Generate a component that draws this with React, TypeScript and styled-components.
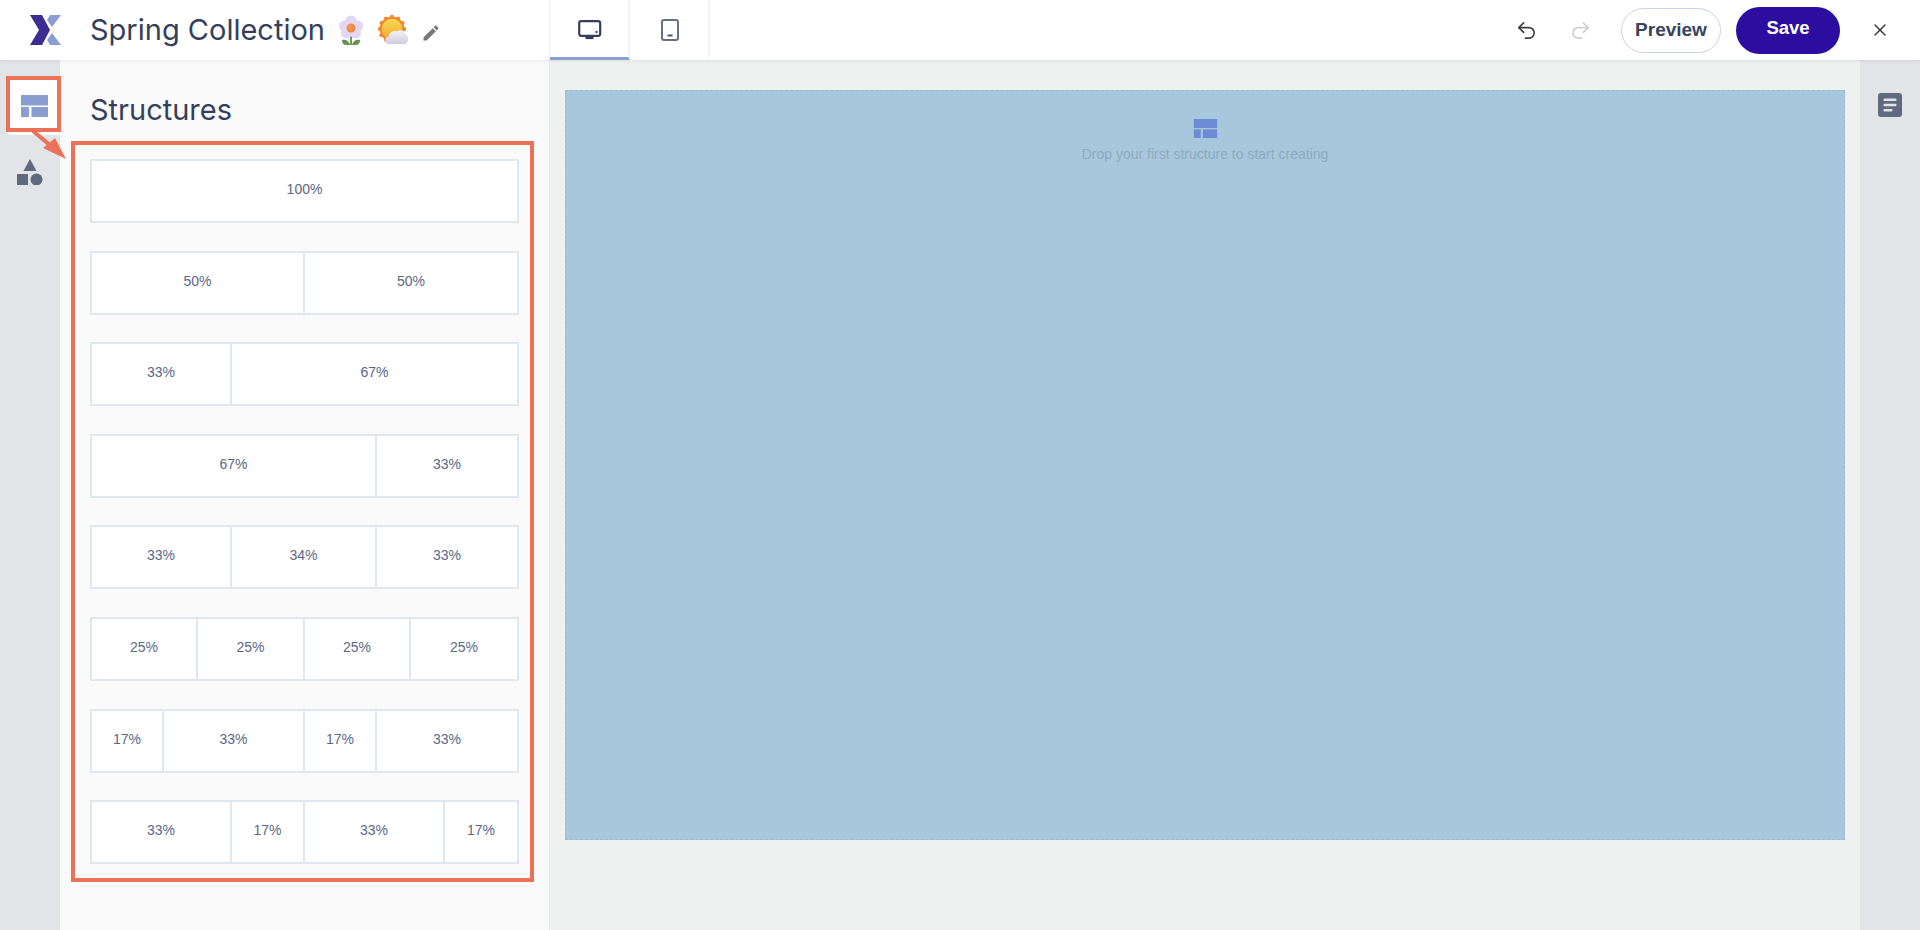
import React from "react";
import styled, { createGlobalStyle } from "styled-components";
import { Undo2, Redo2, X } from "lucide-react";
import { MdEdit } from "react-icons/md";

const Global = createGlobalStyle`
  html, body { margin: 0; padding: 0; background: #fff; }
  * { box-sizing: border-box; }
  body { font-family: "Liberation Sans", Arial, sans-serif; overflow: hidden; }
`;

const Page = styled.div`
  width: 1920px; height: 930px; display: flex; flex-direction: column; position: relative; overflow: hidden;
`;
const Header = styled.header`
  height: 60px; flex: none; display: flex; align-items: stretch; background: #fff;
  box-shadow: 0 1px 3px rgba(60, 70, 90, 0.1); position: relative; z-index: 2;
`;
const Brand = styled.div`
  width: 550px; flex: none; display: flex; align-items: center; padding-left: 30px; border-right: 1px solid #eeeff1;
`;
const Title = styled.h1`
  margin: 0 0 0 29px; font: 400 29px/60px Inter, sans-serif; color: #333f5c; white-space: nowrap;
`;
const Emoji = styled.svg`
  flex: none; margin-left: ${(p: { $gap: number }) => p.$gap}px;
`;
const EditMark = styled.span`
  display: flex; margin: 6px 0 0 12px; color: #787878; font-size: 20px;
`;
const Tabs = styled.nav`
  display: flex; flex: none;
`;
const Tab = styled.div<{ $active?: boolean }>`
  width: 80px; display: flex; align-items: center; justify-content: center; padding: 3px 0 0 1px;
  border-right: 2px solid #f1f1f2;
  border-bottom: 3px solid ${(p) => (p.$active ? "#8a9fd0" : "transparent")};
`;
const Actions = styled.div`
  margin-left: auto; display: flex; align-items: center; padding-right: 30px;
`;
const History = styled.span<{ $muted?: boolean }>`
  display: flex; width: 54px; justify-content: center; color: ${(p) => (p.$muted ? "#cfcfcf" : "#3d3d3d")};
`;
const Preview = styled.button`
  width: 100px; height: 45px; margin: 1px 0 0 14px; border: 1px solid #ccd3e3; border-radius: 23px; background: #fff;
  color: #37425c; font: 700 19px "Liberation Sans", sans-serif; padding: 0 0 2px;
`;
const Save = styled.button`
  width: 104px; height: 47px; margin-left: 15px; border: 0; border-radius: 24px; background: #2b0ea0;
  color: #fff; font: 700 18.5px "Liberation Sans", sans-serif; padding: 0 0 4px;
`;
const Close = styled.span`
  display: flex; margin-left: 30px; color: #3d3d3d;
`;
const Body = styled.main`
  flex: 1; display: flex; min-height: 0; position: relative;
`;
const Rail = styled.aside`
  width: 60px; flex: none; background: #e3e4e8; padding: 16px 0 0 6px; display: flex; flex-direction: column;
`;
const RailItem = styled.div<{ $active?: boolean }>`
  width: 54px; height: 59px; display: flex; align-items: center; justify-content: center;
  background: ${(p) => (p.$active ? "#fff" : "transparent")};
  border-radius: 6px 0 0 6px; margin-bottom: 7px; padding-left: ${(p) => (p.$active ? 3 : 0)}px;
  padding-right: ${(p) => (p.$active ? 0 : 7)}px;
`;
const Panel = styled.section`
  width: 490px; flex: none; background: #fafafa; border-right: 1px solid #e8e9ea; padding: 0 0 0 30px;
`;
const PanelTitle = styled.h2`
  margin: 0; height: 99px; padding-top: 30px; font: 400 29px/40px Inter, sans-serif; color: #333f5c;
`;
const Rows = styled.div`
  width: 429px; display: flex; flex-direction: column; gap: 27.6px;
`;
const Row = styled.div<{ $cols: string }>`
  height: 64px; display: grid; grid-template-columns: ${(p) => p.$cols}; border: 2px solid #dfe8f0; background: #fff;
`;
const Cell = styled.div`
  display: flex; justify-content: center; padding-top: 18px; font-size: 14px; line-height: 20px; color: #5c6784;
  & + & { border-left: 2px solid #dfe8f0; }
`;
const Canvas = styled.section`
  flex: 1; background: #eff0f0; padding: 30px 15px 0; min-width: 0;
`;
const DropZone = styled.div`
  height: 750px; background: #a7c8dc; border: 1px dashed #9abad0; display: flex; flex-direction: column; align-items: center; padding-top: 28px;
`;
const DropText = styled.p`
  margin: 6px 0 0; font-size: 14px; line-height: 20px; color: #8ea9c1;
`;
const SideRail = styled.aside`
  width: 60px; flex: none; background: #e3e4e8; padding: 33px 0 0 18px;
`;
const Highlight = styled.div`
  position: absolute; border: 4px solid #ec7159; pointer-events: none;
`;
const RailMark = styled(Highlight)`
  left: 6px; top: 16px; width: 55px; height: 56px;
`;
const ListMark = styled(Highlight)`
  left: 71px; top: 81px; width: 463px; height: 741px;
`;
const Arrow = styled.svg`
  position: absolute; left: 28px; top: 68px; pointer-events: none;
`;

const Logo = () => (
  <svg width="31" height="30" viewBox="0 0 31 30">
    <path d="M0 0H12L20 15L12 30H0L9 15Z" fill="#3b2d91" />
    <path d="M20 0H31L22 12L17 5Z" fill="#8a9fd0" />
    <path d="M22 18L31 30H20L17 25Z" fill="#8a9fd0" />
  </svg>
);

const Flower = () => (
  <Emoji $gap={14} width="24" height="31" viewBox="0 0 24 31">
    <defs>
      <radialGradient id="ctr" cx="0.4" cy="0.4" r="0.7"><stop offset="0" stopColor="#f6a04a" /><stop offset="1" stopColor="#ea7d3a" /></radialGradient>
    </defs>
    <path d="M11 21V30H13V21Z" fill="#6f9a55" />
    <path d="M3 25C7 24 10 26 11 30H7C4 30 3 27 3 25ZM21 25C17 24 14 26 13 30H17C20 30 21 27 21 25Z" fill="#64934f" />
    <g fill="#e2d8f2">
      <circle cx="12" cy="6.5" r="6" /><circle cx="5.5" cy="11" r="5.5" /><circle cx="18.5" cy="11" r="5.5" /><circle cx="7.5" cy="18" r="5.5" /><circle cx="16.5" cy="18" r="5.5" />
    </g>
    <circle cx="12" cy="13" r="4.5" fill="url(#ctr)" />
  </Emoji>
);

const SunCloud = () => (
  <Emoji $gap={15} width="31" height="30" viewBox="0 0 31 30">
    <defs>
      <linearGradient id="sun" x1="0" y1="0" x2="0" y2="1"><stop offset="0" stopColor="#fbd84f" /><stop offset="1" stopColor="#efab35" /></linearGradient>
      <linearGradient id="cloud" x1="0" y1="0" x2="0" y2="1"><stop offset="0" stopColor="#f4f2f8" /><stop offset="1" stopColor="#cfcde0" /></linearGradient>
    </defs>
    <circle cx="14" cy="14" r="12.4" fill="#ee8a30" />
    <g fill="#ee8a30">
      {[0, 30, 60, 90, 120, 150, 180, 210, 240, 270, 300, 330].map((a) => (
        <circle key={a} cx={14 + 12.3 * Math.cos((a * Math.PI) / 180)} cy={14 + 12.3 * Math.sin((a * Math.PI) / 180)} r="1.9" />
      ))}
    </g>
    <circle cx="14" cy="14" r="10.3" fill="url(#sun)" />
    <path d="M11 29C6.5 29 6 22 10.5 21.5C11 18 15 15 19 16.5C22 14 27 15 27.5 19C31 20 31.5 29 26 29Z" fill="url(#cloud)" />
  </Emoji>
);

const Monitor = () => (
  <svg width="24" height="20" viewBox="0 0 24 20" fill="none">
    <rect x="1.2" y="1.2" width="21" height="14.6" rx="2" stroke="#333f5c" strokeWidth="2.2" />
    <rect x="7.5" y="16.5" width="8" height="2.6" fill="#333f5c" />
    <rect x="17.5" y="11" width="2" height="2" fill="#333f5c" />
  </svg>
);
const Tablet = () => (
  <svg width="18" height="22" viewBox="0 0 18 22" fill="none">
    <rect x="1" y="1" width="16" height="20" rx="2" stroke="#667085" strokeWidth="2" />
    <rect x="6.5" y="15.5" width="5" height="2" fill="#4a556f" />
  </svg>
);
const StructureGlyph = ({ w, h, c }: { w: number; h: number; c: string }) => (
  <svg width={w} height={h} viewBox="0 0 27 22" fill={c}>
    <rect x="0" y="0" width="27" height="10.5" />
    <rect x="0" y="12" width="8" height="10" />
    <rect x="10.5" y="12" width="16.5" height="10" />
  </svg>
);
const Shapes = () => (
  <svg width="26" height="26" viewBox="0 0 26 26" fill="#5f6980">
    <path d="M13 0L19.5 12H6.5Z" />
    <rect x="0" y="15" width="11" height="11" />
    <circle cx="19.5" cy="20.5" r="6" />
  </svg>
);
const NoteIcon = () => (
  <svg width="24" height="24" viewBox="0 0 24 24">
    <rect width="24" height="24" rx="3" fill="#5f6980" />
    <rect x="5.5" y="5.5" width="13" height="2.6" rx="1" fill="#e3e4e8" />
    <rect x="5.5" y="10.7" width="13" height="2.6" rx="1" fill="#e3e4e8" />
    <rect x="5.5" y="16" width="9" height="2.6" rx="1" fill="#e3e4e8" />
  </svg>
);

const layouts: { cols: string; cells: string[] }[] = [
  { cols: "1fr", cells: ["100%"] },
  { cols: "211px 1fr", cells: ["50%", "50%"] },
  { cols: "138px 1fr", cells: ["33%", "67%"] },
  { cols: "283px 1fr", cells: ["67%", "33%"] },
  { cols: "138px 145px 1fr", cells: ["33%", "34%", "33%"] },
  { cols: "104px 107px 106px 1fr", cells: ["25%", "25%", "25%", "25%"] },
  { cols: "70px 141px 72px 1fr", cells: ["17%", "33%", "17%", "33%"] },
  { cols: "138px 73px 140px 1fr", cells: ["33%", "17%", "33%", "17%"] },
];

export default function App() {
  return (
    <Page>
      <Global />
      <Header>
        <Brand>
          <Logo />
          <Title>Spring Collection</Title>
          <Flower />
          <SunCloud />
          <EditMark><MdEdit /></EditMark>
        </Brand>
        <Tabs>
          <Tab $active><Monitor /></Tab>
          <Tab><Tablet /></Tab>
        </Tabs>
        <Actions>
          <History><Undo2 size={23} strokeWidth={1.7} /></History>
          <History $muted><Redo2 size={23} strokeWidth={1.7} /></History>
          <Preview>Preview</Preview>
          <Save>Save</Save>
          <Close><X size={20} strokeWidth={1.8} /></Close>
        </Actions>
      </Header>
      <Body>
        <Rail>
          <RailItem $active><StructureGlyph w={27} h={22} c="#8a9fd0" /></RailItem>
          <RailItem><Shapes /></RailItem>
        </Rail>
        <Panel>
          <PanelTitle>Structures</PanelTitle>
          <Rows>
            {layouts.map((l, i) => (
              <Row key={i} $cols={l.cols}>
                {l.cells.map((c, j) => <Cell key={j}>{c}</Cell>)}
              </Row>
            ))}
          </Rows>
        </Panel>
        <Canvas>
          <DropZone>
            <StructureGlyph w={25} h={19} c="#6e8bd6" />
            <DropText>Drop your first structure to start creating</DropText>
          </DropZone>
        </Canvas>
        <SideRail><NoteIcon /></SideRail>
        <RailMark />
        <ListMark />
        <Arrow width="42" height="36" viewBox="0 0 42 36">
          <path d="M5 3L23 18" stroke="#ec7159" strokeWidth="4" fill="none" />
          <path d="M38 31L15 20L27 10Z" fill="#ec7159" />
        </Arrow>
      </Body>
    </Page>
  );
}
